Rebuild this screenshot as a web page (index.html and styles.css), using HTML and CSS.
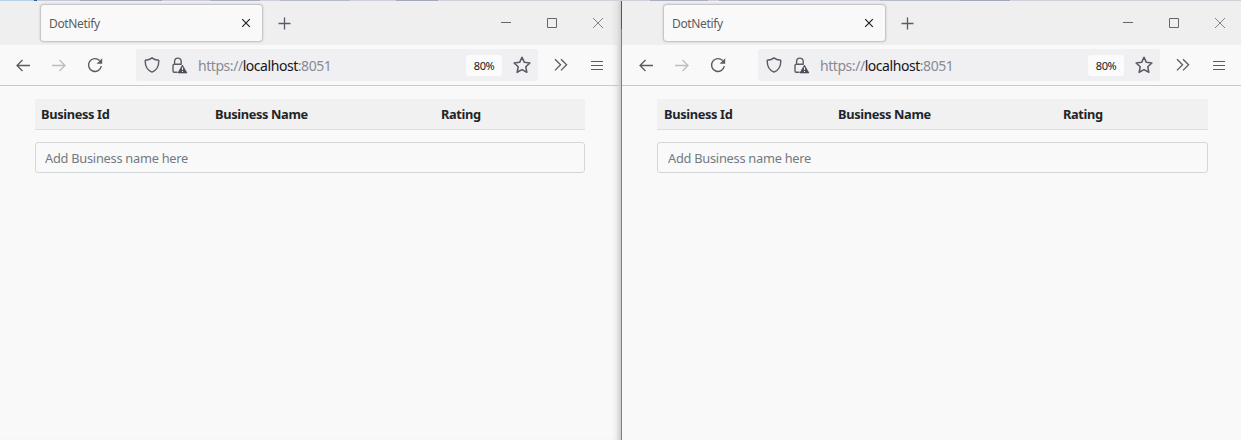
FILE: index.html
```html
<!DOCTYPE html>
<html lang="en">
<head>
<meta charset="utf-8">
<title>DotNetify</title>
<link rel="stylesheet" href="styles.css">
</head>
<body>
<svg class="symbols" aria-hidden="true">
  <symbol id="close-tab" viewBox="0 0 10 10"><path d="M1.200 1.200l7.600 7.600M8.800 1.200l-7.600 7.600" stroke="#222" stroke-width="1.200"/></symbol>
  <symbol id="plus" viewBox="0 0 13 13"><path d="M6.500 .5v12M.5 6.500h12" stroke="#5b5b66" stroke-width="1.300"/></symbol>
  <symbol id="min" viewBox="0 0 12 12"><path d="M1 5.500h10" stroke="#666"/></symbol>
  <symbol id="max" viewBox="0 0 12 12"><path d="M1.500 1.500h9v9h-9z" stroke="#666"/></symbol>
  <symbol id="close" viewBox="0 0 12 12"><path d="M1 1l10 10M11 1L1 11" stroke="#777" stroke-width=".9"/></symbol>
  <symbol id="back" viewBox="0 0 16 16"><path d="M15 8.500H2M7.500 3L2 8.500l5.500 5.500" stroke="currentColor" stroke-width="1.300"/></symbol>
  <symbol id="forward" viewBox="0 0 16 16"><path d="M1 8.500h13M8.500 3L14 8.500 8.500 14" stroke="currentColor" stroke-width="1.300"/></symbol>
  <symbol id="reload" viewBox="0 0 16 16"><path d="M12.600 3.600A6.400 6.400 0 1 0 14.300 9" stroke="#5b5b66" stroke-width="1.400"/><path d="M15.200 1.200v5.600H9.600z" fill="#5b5b66"/></symbol>
  <symbol id="shield" viewBox="0 0 16 16"><path d="M8 .9C6.500 2.200 4 3 1.300 3.200.9 9 3.500 13.400 8 15.200c4.500-1.800 7.100-6.200 6.700-12C12 3 9.500 2.200 8 .9z" stroke="#5b5b66" stroke-width="1.400" stroke-linejoin="round"/></symbol>
  <symbol id="lock" viewBox="0 0 17 17"><path d="M6.500 15.300H3.200a1.200 1.200 0 0 1-1.200-1.200V8.500a1.200 1.200 0 0 1 1.200-1.200h7.300M3.600 7.300V4.400a3.300 3.300 0 0 1 6.600 0v3" stroke="#5b5b66" stroke-width="1.400"/><path d="M11.400 8l4.600 8H6.900z" fill="#4b4b55" stroke="#4b4b55" stroke-width=".6" stroke-linejoin="round"/><path d="M11.500 10.200v2.800M11.500 13.900v1.200" stroke="#f0f0f4" stroke-width="1.100"/></symbol>
  <symbol id="star" viewBox="0 0 16 16"><path d="M8 1.100l2.100 4.500 4.900.6-3.600 3.400.9 4.900L8 12.100l-4.300 2.400.9-4.900L1 6.200l4.900-.6z" stroke="#5b5b66" stroke-width="1.400" stroke-linejoin="round"/></symbol>
  <symbol id="chevrons" viewBox="0 0 14 14"><path d="M1 1.200l5.600 5.600L1 12.400M7 1.200l5.600 5.600L7 12.400" stroke="#5b5b66" stroke-width="1.300"/></symbol>
  <symbol id="menu" viewBox="0 0 12 11"><path d="M0 1.500h12M0 5.500h12M0 9.500h12" stroke="#5b5b66" stroke-width="1.100"/></symbol>
</svg>
<div class="desktop-strip"></div>
<main class="windows">
  <section class="window window-left">
    <header class="tabbar">
      <div class="tab"><span class="tab-title">DotNetify</span><svg class="i10"><use href="#close-tab"/></svg></div>
      <svg class="new-tab"><use href="#plus"/></svg>
      <div class="controls"><svg><use href="#min"/></svg><svg><use href="#max"/></svg><svg><use href="#close"/></svg></div>
    </header>
    <nav class="toolbar">
      <div class="nav-buttons"><svg><use href="#back"/></svg><svg class="disabled"><use href="#forward"/></svg><svg><use href="#reload"/></svg></div>
      <div class="urlbar">
        <svg class="shield"><use href="#shield"/></svg><svg class="lock"><use href="#lock"/></svg>
        <span class="url">https://<b>localhost</b>:8051</span>
        <span class="zoom">80%</span><svg class="star"><use href="#star"/></svg>
      </div>
      <svg class="chevrons"><use href="#chevrons"/></svg><svg class="menu"><use href="#menu"/></svg>
    </nav>
    <div class="page">
      <div class="thead"><span>Business Id</span><span>Business Name</span><span>Rating</span></div>
      <div class="field"><span>Add Business name here</span></div>
    </div>
  </section>
  <section class="window window-right">
    <header class="tabbar">
      <div class="tab"><span class="tab-title">DotNetify</span><svg class="i10"><use href="#close-tab"/></svg></div>
      <svg class="new-tab"><use href="#plus"/></svg>
      <div class="controls"><svg><use href="#min"/></svg><svg><use href="#max"/></svg><svg><use href="#close"/></svg></div>
    </header>
    <nav class="toolbar">
      <div class="nav-buttons"><svg><use href="#back"/></svg><svg class="disabled"><use href="#forward"/></svg><svg><use href="#reload"/></svg></div>
      <div class="urlbar">
        <svg class="shield"><use href="#shield"/></svg><svg class="lock"><use href="#lock"/></svg>
        <span class="url">https://<b>localhost</b>:8051</span>
        <span class="zoom">80%</span><svg class="star"><use href="#star"/></svg>
      </div>
      <svg class="chevrons"><use href="#chevrons"/></svg><svg class="menu"><use href="#menu"/></svg>
    </nav>
    <div class="page">
      <div class="thead"><span>Business Id</span><span>Business Name</span><span>Rating</span></div>
      <div class="field"><span>Add Business name here</span></div>
    </div>
  </section>
</main>
</body>
</html>
```

FILE: styles.css
```css
* { box-sizing: border-box; }
body { margin: 0; width: 1241px; height: 440px; overflow: hidden; background: #f9f9f9; font-family: "Noto Sans", "Open Sans", sans-serif; color: #212529; }
svg { display: block; fill: none; flex: none; }
.symbols { display: none; }
.desktop-strip { height: 1px; background: linear-gradient(90deg, #b5d2e8 0 34px, #2b5c92 34px 37px, #c5cad8 37px 80px, #a3a9ba 80px 162px, #c9cddb 162px 210px, #a9afc0 210px 260px, #cdd0da 260px 280px, #b5bac8 280px 350px, #cdd0da 350px 396px, #a3a9ba 396px 438px, #d0d2da 438px 650px, #a9afc0 650px 708px, #cdd0da 708px 719px, #a9afc0 719px 800px, #cdd0da 800px 880px, #b5bac8 880px 960px, #a3a9ba 960px 1010px, #d0d2da 1010px); }
.windows { display: grid; grid-template-columns: 622px 619px; height: 439px; }
.window { display: flex; flex-direction: column; min-width: 0; }
.window-left { border-right: 1px solid; border-image: linear-gradient(#555 0 29px, #808080 29px) 1; box-shadow: inset -8px 0 7px -6px #bbb; }
.tabbar { display: flex; align-items: flex-start; height: 44px; padding-left: 41px; background: #efefef; }
.window-left .tabbar { background: linear-gradient(90deg, #efefef 0 611px, #e5e5e5 617px, #cecece 621px); }
.window-right .tabbar { padding-left: 42px; }
.tab { display: flex; align-items: center; justify-content: space-between; width: 221px; height: 36px; margin-top: 4px; padding: 0 11px 0 8px; background: #f9f9f9; border-radius: 3px; box-shadow: 0 0 2px 1px #b9b8c0; }
.tab-title { font-size: 12px; line-height: 16px; color: #5c5c60; letter-spacing: -.35px; padding-top: 2px; }
.i10 { width: 10px; height: 10px; }
.new-tab { width: 13px; height: 13px; margin: 16px 0 0 16px; }
.controls { display: flex; gap: 34px; margin: 16px 0 0 209px; }
.window-right .controls { margin-left: 208px; }
.controls svg { width: 12px; height: 12px; }
.toolbar { display: flex; align-items: center; height: 41px; padding-left: 15px; border-bottom: 1px solid #c9c9cd; }
.window-right .toolbar { padding-left: 16px; }
.nav-buttons { display: flex; gap: 20px; width: 121px; color: #5b5b66; }
.window-right .nav-buttons { width: 120px; }
.nav-buttons svg { width: 16px; height: 16px; }
.nav-buttons .disabled { color: #bdbdc2; }
.urlbar { display: flex; align-items: center; width: 402px; height: 32px; padding-left: 8px; background: #f0f0f3; border-radius: 3px; }
.shield { width: 16px; height: 16px; }
.lock { width: 17px; height: 17px; margin-left: 11px; }
.url { width: 268px; margin-left: 10px; padding-top: 2px; font-size: 14px; line-height: 20px; color: #8a8a94; letter-spacing: -.45px; white-space: nowrap; }
.url b { font-weight: 400; color: #15141a; }
.zoom { width: 36px; height: 21px; border-radius: 3px; background: #fbfbfb; font-size: 11px; line-height: 22px; letter-spacing: -.4px; text-align: center; color: #15141a; }
.star { width: 18px; height: 18px; margin-left: 11px; }
.chevrons { width: 14px; height: 14px; margin-left: 16px; }
.menu { width: 12px; height: 11px; margin-left: 23px; }
.page { width: 550px; margin: 13px 0 0 35px; }
.window-right .page { width: 551px; }
.thead { display: grid; grid-template-columns: 174px 226px 1fr; height: 31px; padding-left: 6px; border-bottom: 1px solid #dedede; background: #f1f1f1; font-size: 12.800px; line-height: 31px; font-weight: 700; letter-spacing: -.35px; white-space: nowrap; }
.window-right .thead { grid-template-columns: 174px 225px 1fr; padding-left: 7px; }
.field { height: 31px; margin-top: 12px; padding-left: 9px; border: 1px solid #d4d7da; border-radius: 3px; font-size: 12.800px; line-height: 31px; letter-spacing: -.25px; color: #737a82; }
.window-right .field { padding-left: 10px; }
```
